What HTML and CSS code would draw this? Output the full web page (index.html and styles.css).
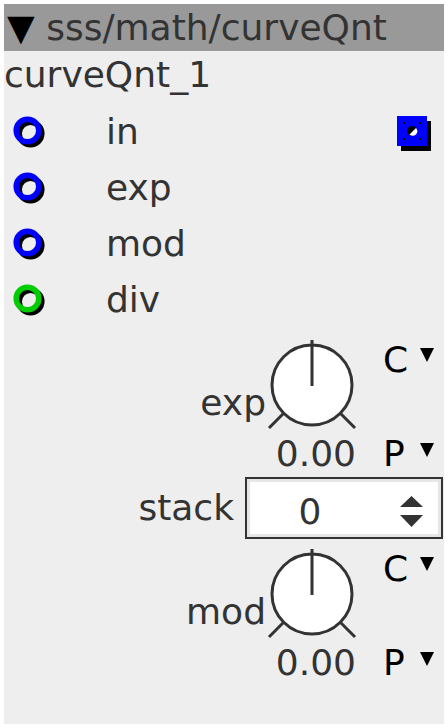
FILE: index.html
```html
<!DOCTYPE html>
<html>
<head>
<meta charset="utf-8">
<link rel="stylesheet" href="styles.css">
</head>
<body>
<div class="panel">
  <div class="header"><span class="tri">▼</span> sss/math/curveQnt</div>
  <div class="name">curveQnt_1</div>
  <div class="ports">
    <div class="port">
      <svg class="ring" width="33" height="33" viewBox="0 0 33 33"><circle cx="17.5" cy="17.5" r="11.3" fill="none" stroke="#000" stroke-width="5.5"/><circle cx="14.5" cy="14.5" r="11.3" fill="none" stroke="#00f" stroke-width="5.5"/></svg>
      <span class="plabel">in</span>
      <svg class="outport" width="35" height="35" viewBox="0 0 35 35"><rect x="4" y="5" width="30" height="30" fill="#000"/><rect x="0" y="0" width="30" height="30" fill="#00f"/><rect x="6" y="6" width="2" height="2" fill="#000"/><rect x="22" y="6" width="2" height="2" fill="#000"/><rect x="6" y="22" width="2" height="2" fill="#000"/><rect x="22" y="22" width="2" height="2" fill="#000"/><circle cx="15" cy="15" r="5" fill="#000"/><path d="M12.5 18.5 L19 12 A4 4 0 0 1 12.5 18.5 Z" fill="#fff"/></svg>
    </div>
    <div class="port">
      <svg class="ring" width="33" height="33" viewBox="0 0 33 33"><circle cx="17.5" cy="17.5" r="11.3" fill="none" stroke="#000" stroke-width="5.5"/><circle cx="14.5" cy="14.5" r="11.3" fill="none" stroke="#00f" stroke-width="5.5"/></svg>
      <span class="plabel">exp</span>
    </div>
    <div class="port">
      <svg class="ring" width="33" height="33" viewBox="0 0 33 33"><circle cx="17.5" cy="17.5" r="11.3" fill="none" stroke="#000" stroke-width="5.5"/><circle cx="14.5" cy="14.5" r="11.3" fill="none" stroke="#00f" stroke-width="5.5"/></svg>
      <span class="plabel">mod</span>
    </div>
    <div class="port">
      <svg class="ring" width="33" height="33" viewBox="0 0 33 33"><circle cx="17.5" cy="17.5" r="11.3" fill="none" stroke="#000" stroke-width="5.5"/><circle cx="14.5" cy="14.5" r="11.3" fill="none" stroke="#0c0" stroke-width="5.5"/></svg>
      <span class="plabel">div</span>
    </div>
  </div>
  <div class="controls">
    <div class="knob">
      <span class="klabel">exp</span>
      <svg class="dial" width="92" height="92" viewBox="0 0 92 92"><circle cx="46" cy="46" r="40" fill="#fff" stroke="#333" stroke-width="3"/><line x1="46" y1="1" x2="46" y2="47" stroke="#333" stroke-width="3"/><line x1="17.7" y1="74.3" x2="3" y2="89" stroke="#333" stroke-width="3"/><line x1="74.3" y1="74.3" x2="89" y2="89" stroke="#333" stroke-width="3"/></svg>
      <div class="sel sel-c"><span>C</span><svg class="dd" width="14" height="14" viewBox="0 0 14 14"><polygon points="0,0 14,0 7,14" fill="#000"/></svg></div>
      <span class="value">0.00</span>
      <div class="sel sel-p"><span>P</span><svg class="dd" width="14" height="14" viewBox="0 0 14 14"><polygon points="0,0 14,0 7,14" fill="#000"/></svg></div>
    </div>
    <div class="stackrow">
      <span class="slabel">stack</span>
      <div class="spin">
        <span class="spinval">0</span>
        <svg class="arrows" width="23" height="31" viewBox="0 0 23 31"><polygon points="11.5,0 23,11 0,11" fill="#333"/><polygon points="0,19 23,19 11.5,31" fill="#333"/></svg>
      </div>
    </div>
    <div class="knob knob2">
      <span class="klabel">mod</span>
      <svg class="dial" width="92" height="92" viewBox="0 0 92 92"><circle cx="46" cy="46" r="40" fill="#fff" stroke="#333" stroke-width="3"/><line x1="46" y1="1" x2="46" y2="47" stroke="#333" stroke-width="3"/><line x1="17.7" y1="74.3" x2="3" y2="89" stroke="#333" stroke-width="3"/><line x1="74.3" y1="74.3" x2="89" y2="89" stroke="#333" stroke-width="3"/></svg>
      <div class="sel sel-c"><span>C</span><svg class="dd" width="14" height="14" viewBox="0 0 14 14"><polygon points="0,0 14,0 7,14" fill="#000"/></svg></div>
      <span class="value">0.00</span>
      <div class="sel sel-p"><span>P</span><svg class="dd" width="14" height="14" viewBox="0 0 14 14"><polygon points="0,0 14,0 7,14" fill="#000"/></svg></div>
    </div>
  </div>
</div>
</body>
</html>
```

FILE: styles.css
```css
* { box-sizing: border-box; }
html, body { background: #fff; }
body {
  margin: 4px;
  font-family: "DejaVu Sans", sans-serif;
}
.panel {
  width: 440px;
  height: 720px;
  background: #eee;
  color: #333;
  font-size: 36px;
  overflow: hidden;
}
.header {
  background: #999;
  height: 47px;
  line-height: 47px;
  padding-left: 3px;
  white-space: nowrap;
}
.tri { color: #000; }
.name {
  height: 53px;
  line-height: 48px;
  white-space: nowrap;
}
.port {
  display: flex;
  align-items: center;
  height: 56px;
  padding-left: 9px;
}
.ring { display: block; flex: none; }
.plabel {
  margin-left: 60px;
  line-height: 56px;
}
.outport {
  display: block;
  margin-left: auto;
  margin-right: 12px;
  margin-top: 3px;
}
.controls {
  display: flex;
  flex-direction: column;
  align-items: flex-end;
  margin-top: 11px;
}
.knob {
  display: grid;
  grid-template-columns: auto 92px 25px 51px;
  grid-template-rows: 92px 46px;
  margin-right: 10px;
}
.knob2 { margin-top: 9px; }
.klabel {
  grid-column: 1;
  grid-row: 1;
  align-self: start;
  line-height: 40px;
  margin-top: 44px;
}
.dial { grid-column: 2; grid-row: 1; display: block; }
.sel {
  grid-column: 4;
  display: flex;
  justify-content: space-between;
  align-items: flex-start;
  color: #000;
}
.sel-c { grid-row: 1; line-height: 42px; }
.sel-c .dd { margin-top: 9px; }
.sel-p { grid-row: 2; line-height: 46px; }
.sel-p .dd { margin-top: 12px; }
.dd { display: block; }
.value {
  grid-column: 2;
  grid-row: 2;
  text-align: right;
  padding-right: 2px;
  line-height: 46px;
  white-space: nowrap;
}
.stackrow {
  display: flex;
  align-items: center;
  margin-right: 1px;
}
.slabel {
  margin-right: 11px;
  line-height: 40px;
}
.spin {
  width: 198px;
  height: 62px;
  border: 2px solid #333;
  background: #fff;
  box-shadow: inset 0 0 0 3px #e6e6e6;
  display: flex;
  align-items: flex-start;
}
.spinval {
  width: 126px;
  text-align: center;
  padding-top: 8px;
  line-height: 50px;
}
.arrows {
  display: block;
  margin-left: 27px;
  margin-top: 17px;
}
```
